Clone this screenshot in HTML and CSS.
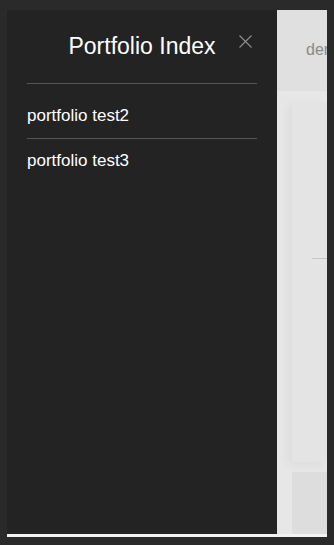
FILE: index.html
```html
<!DOCTYPE html>
<html lang="en">
<head>
    <meta charset="UTF-8">
    <meta name="viewport" content="width=device-width, initial-scale=1.0">
    <title>Portfolio Index</title>
    <link rel="stylesheet" href="styles.css">
</head>
<body>

<div class="screen">
    <div class="page">
        <div class="page-header">
            <span class="page-title">demo</span>
        </div>
        <div class="page-body">
            <div class="card">
                <div class="card-rule"></div>
            </div>
            <div class="card card-next"></div>
        </div>
    </div>

    <div class="drawer">
        <div class="drawer-head">
            <h2>Portfolio Index</h2>
            <button class="close" aria-label="Close">
                <svg width="13" height="13" viewBox="0 0 13 13">
                    <path d="M0.5 0.5 L12.5 12.5 M12.5 0.5 L0.5 12.5" stroke="#8f8f8f" stroke-width="1.1" fill="none"/>
                </svg>
            </button>
        </div>
        <ul class="drawer-list">
            <li>portfolio test2</li>
            <li>portfolio test3</li>
        </ul>
    </div>
</div>

</body>
</html>
```

FILE: styles.css
```css
body {
    margin: 0;
    background: #2a2a2a;
    font-family: 'Liberation Sans', Arial, sans-serif;
    height: 545px;
    overflow: hidden;
}
.screen {
    position: relative;
    margin: 10px 7px 0 7px;
    height: 527px;
    overflow: hidden;
    background: #f2f2f2;
}
.page {
    height: 524px;
    background: #e7e7e7;
    display: flex;
    flex-direction: column;
}
.page-header {
    flex-shrink: 0;
    height: 81px;
    background: #e0e0e0;
    padding: 32px 0 0 299px;
    box-sizing: border-box;
    white-space: nowrap;
    overflow: hidden;
}
.page-title {
    display: block;
    font-size: 16px;
    line-height: 1;
    color: #8a8a8a;
}
.page-body {
    flex: 1;
    padding: 11px 0 0 285px;
    display: flex;
    flex-direction: column;
    gap: 10px;
    overflow: hidden;
}
.card {
    flex-shrink: 0;
    height: 360px;
    background: #e4e4e4;
    box-shadow: -4px 3px 10px rgba(0, 0, 0, 0.05);
    position: relative;
}
.card-rule {
    position: absolute;
    left: 20px;
    right: 0;
    top: 156px;
    border-top: 1px solid #c4c4c4;
}
.card-next {
    height: 80px;
    background: #dddddd;
    box-shadow: none;
}
.drawer {
    position: absolute;
    left: 0;
    top: 0;
    width: 270px;
    height: 524px;
    background: #232323;
    padding: 0 20px;
    box-sizing: border-box;
    color: #fff;
}
.drawer-head {
    position: relative;
    height: 74px;
    box-sizing: border-box;
    padding-top: 25px;
    border-bottom: 1px solid #555;
    text-align: center;
}
.drawer-head h2 {
    margin: 0;
    font-weight: normal;
    font-size: 23px;
    line-height: 1;
}
.close {
    position: absolute;
    right: 5px;
    top: 25px;
    background: none;
    border: none;
    padding: 0;
    width: 13px;
    height: 13px;
    line-height: 0;
}
.drawer-list {
    list-style: none;
    margin: 0;
    padding: 10px 0 0 0;
}
.drawer-list li {
    font-size: 17px;
    height: 45px;
    line-height: 1;
    padding-top: 13px;
    box-sizing: border-box;
    border-bottom: 1px solid #555;
}
.drawer-list li:last-child {
    border-bottom: none;
}
```
